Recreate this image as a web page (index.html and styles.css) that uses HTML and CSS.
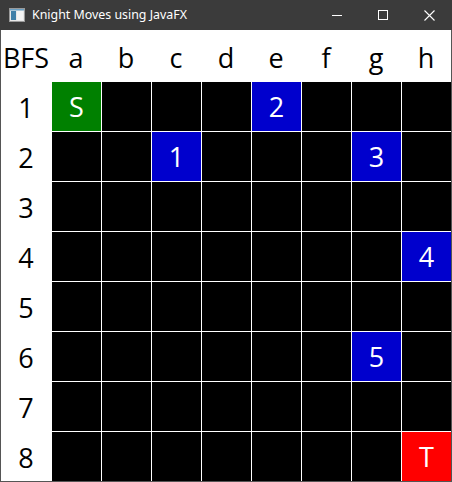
FILE: index.html
```html
<!DOCTYPE html>
<html lang="en">
<head>
    <meta charset="UTF-8">
    <title>Knight Moves using JavaFX</title>
    <link rel="stylesheet" href="styles.css">
</head>
<body>
    <div class="window">
        <div class="titlebar">
            <svg class="app-icon" width="16" height="14" viewBox="0 0 16 14">
                <rect x="0.5" y="0.5" width="15" height="13" fill="#e8e8e8" stroke="#9a9a9a"/>
                <rect x="2" y="3" width="5" height="9" fill="#3f7fa8"/>
                <rect x="8" y="3" width="6" height="9" fill="#f4f4f4"/>
                <rect x="1" y="1" width="14" height="1.5" fill="#6aa0c4"/>
            </svg>
            <span class="title">Knight Moves using JavaFX</span>
            <div class="controls">
                <span class="ctl">
                    <svg width="10" height="10" viewBox="0 0 10 10"><line x1="0" y1="5.5" x2="10" y2="5.5" stroke="#fff" stroke-width="1"/></svg>
                </span>
                <span class="ctl">
                    <svg width="10" height="10" viewBox="0 0 10 10"><rect x="0.5" y="0.5" width="9" height="9" fill="none" stroke="#fff" stroke-width="1"/></svg>
                </span>
                <span class="ctl">
                    <svg width="11" height="11" viewBox="0 0 11 11"><path d="M0.5 0.5 L10.5 10.5 M10.5 0.5 L0.5 10.5" stroke="#fff" stroke-width="1.1"/></svg>
                </span>
            </div>
        </div>

        <div class="board" id="board"></div>
    </div>

    <script>
        const cols = ["a", "b", "c", "d", "e", "f", "g", "h"];
        const marks = {
            "a1": ["S", "start"],
            "c2": ["1", "step"],
            "e1": ["2", "step"],
            "g2": ["3", "step"],
            "h4": ["4", "step"],
            "g6": ["5", "step"],
            "h8": ["T", "target"]
        };

        const board = document.getElementById("board");

        function addCell(text, cls) {
            const div = document.createElement("div");
            div.className = cls;
            div.innerText = text;
            board.appendChild(div);
        }

        addCell("BFS", "head");
        cols.forEach(c => addCell(c, "head"));

        for (let r = 1; r <= 8; r++) {
            addCell(r, "head");
            cols.forEach(c => {
                const m = marks[c + r];
                if (m) {
                    addCell(m[0], "sq " + m[1]);
                } else {
                    addCell("", "sq");
                }
            });
        }
    </script>
</body>
</html>
```

FILE: styles.css
```css
body {
    margin: 0;
    background-color: #ffffff;
}
.window {
    width: 452px;
    height: 482px;
    box-sizing: border-box;
    border: 1px solid #555555;
    border-top: none;
    background-color: #ffffff;
}
.titlebar {
    height: 30px;
    margin: 0 -1px;
    background-color: #3b3b3b;
    display: flex;
    align-items: center;
    font-family: "Noto Sans", "Open Sans", sans-serif;
    font-size: 12.4px;
    color: #ffffff;
}
.app-icon {
    margin-left: 9px;
    margin-right: 7px;
}
.title {
    flex: 1;
    padding-bottom: 1px;
}
.controls {
    display: flex;
    height: 30px;
}
.ctl {
    width: 46px;
    height: 30px;
    display: flex;
    align-items: center;
    justify-content: center;
}
.board {
    padding-top: 1px;
    display: grid;
    grid-template-columns: repeat(9, 50px);
    grid-template-rows: repeat(9, 50px);
    font-family: "Open Sans", "Noto Sans", sans-serif;
    font-size: 27px;
}
.head {
    display: flex;
    align-items: center;
    justify-content: center;
    color: #000000;
    white-space: nowrap;
    padding-top: 2px;
    box-sizing: border-box;
}
.sq {
    box-sizing: border-box;
    border-left: 1px solid #ffffff;
    border-top: 1px solid #ffffff;
    background-color: #000000;
    color: #ffffff;
    display: flex;
    align-items: center;
    justify-content: center;
}
.start {
    background-color: #008000;
}
.step {
    background-color: #0000cd;
}
.target {
    background-color: #ff0000;
}
```
